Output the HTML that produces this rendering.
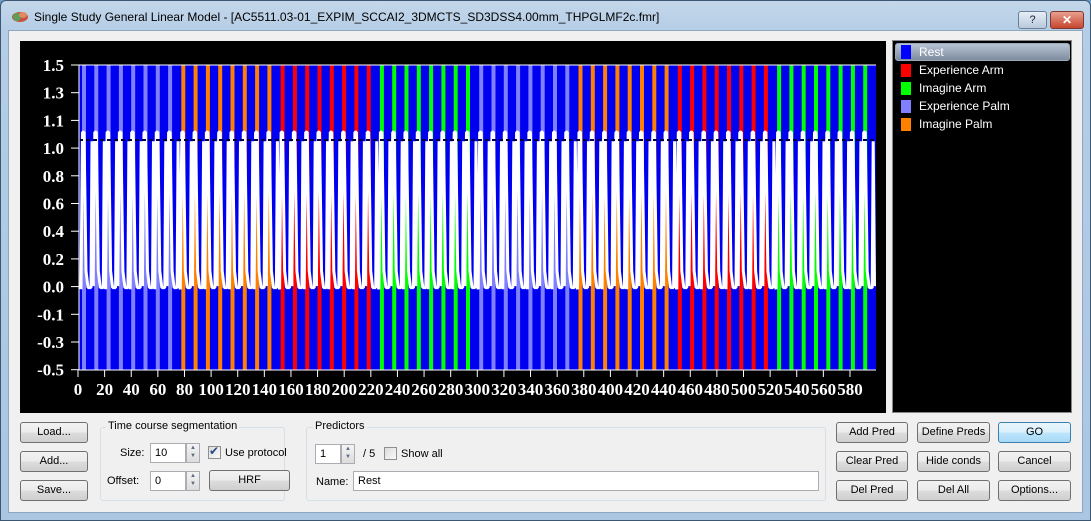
<!DOCTYPE html>
<html><head><meta charset="utf-8"><style>
*{margin:0;padding:0;box-sizing:border-box}
body{width:1091px;height:521px;overflow:hidden;font-family:"Liberation Sans",sans-serif;font-size:11px;color:#000;background:#6b9bc7}
.win{position:absolute;left:0;top:0;width:1091px;height:521px;border-radius:6px 6px 0 0;background:linear-gradient(#c4d7ea,#b5cde6 30px,#aac6e3);border:1px solid #3b5772}
.title{position:absolute;left:33px;top:9px;font-size:12px;color:#000;font-family:"Liberation Sans",sans-serif}
.client{position:absolute;left:8px;top:30px;width:1075px;height:483px;background:#f0f0f0;border:1px solid #8ea6bf}
.btn{position:absolute;height:21px;border:1px solid #707070;border-radius:3px;background:linear-gradient(#f2f2f2,#ebebeb 50%,#dddddd 51%,#cfcfcf);text-align:center;line-height:19px;font-size:11px}
.grp{position:absolute;border:1px solid #d5dfe5;border-radius:3px}
.gl{position:absolute;background:#f0f0f0;padding:0 2px;font-size:11px}
.edit{position:absolute;background:#fff;border:1px solid #abadb3;height:20px;line-height:18px;padding-left:4px}
.spin{position:absolute;width:14px;height:20px;border:1px solid #abadb3;background:linear-gradient(#f4f4f4,#dcdcdc);font-size:6px;line-height:8px;text-align:center;color:#5a6a80}
.lbl{position:absolute}
.cb{position:absolute;width:13px;height:13px;border:1px solid #8f8f8f;background:linear-gradient(135deg,#dcdcdc,#fafafa)}
</style></head><body>
<div class="win">
<svg style="position:absolute;left:10px;top:8px" width="18" height="14"><ellipse cx="9" cy="8" rx="8" ry="5" fill="#c8503c"/><ellipse cx="6" cy="8" rx="4" ry="4" fill="#5aa05a"/><ellipse cx="12" cy="6" rx="4" ry="3" fill="#e08a60"/></svg>
<div class="title">Single Study General Linear Model - [AC5511.03-01_EXPIM_SCCAI2_3DMCTS_SD3DSS4.00mm_THPGLMF2c.fmr]</div>
<div style="position:absolute;left:1017px;top:10px;width:29px;height:18px;border:1px solid #6d7f93;border-radius:3px;background:linear-gradient(#e6eef7,#b8c9dc);text-align:center;font-size:11px;line-height:16px;color:#223">?</div>
<div style="position:absolute;left:1049px;top:10px;width:34px;height:18px;border:1px solid #7a3a30;border-radius:3px;background:linear-gradient(#e8a090,#c7452f);text-align:center;color:#fff;font-weight:bold;font-size:12px;line-height:16px">✕</div>
</div>
<div class="client"></div>
<svg id="ch" style="position:absolute;left:0;top:0" width="1091" height="521"></svg>
<div style="position:absolute;left:892px;top:40px;width:180px;height:373px;background:#000;border:1px solid #888"></div>
<div style="position:absolute;left:895px;top:43px;width:175px;height:18px;border:1px solid #9ab;border-radius:3px;background:linear-gradient(#b8c4d4,#7e8ca0)"></div>
<div style="position:absolute;left:901px;top:45px;width:10px;height:14px;background:#0000ff"></div>
<div style="position:absolute;left:901px;top:64px;width:10px;height:13px;background:#ff0000"></div>
<div style="position:absolute;left:901px;top:82px;width:10px;height:13px;background:#00ff00"></div>
<div style="position:absolute;left:901px;top:100px;width:10px;height:13px;background:#8080ff"></div>
<div style="position:absolute;left:901px;top:118px;width:10px;height:13px;background:#ff8000"></div>
<div style="position:absolute;left:919px;top:45px;color:#fff;font-size:12px;line-height:15px">Rest</div>
<div style="position:absolute;left:919px;top:63px;color:#fff;font-size:12px;line-height:15px">Experience Arm</div>
<div style="position:absolute;left:919px;top:81px;color:#fff;font-size:12px;line-height:15px">Imagine Arm</div>
<div style="position:absolute;left:919px;top:99px;color:#fff;font-size:12px;line-height:15px">Experience Palm</div>
<div style="position:absolute;left:919px;top:117px;color:#fff;font-size:12px;line-height:15px">Imagine Palm</div>
<div class="btn" style="left:20px;top:422px;width:68px">Load...</div>
<div class="btn" style="left:20px;top:451px;width:68px">Add...</div>
<div class="btn" style="left:20px;top:480px;width:68px">Save...</div>
<div class="grp" style="left:100px;top:427px;width:185px;height:74px"></div>
<div class="gl" style="left:106px;top:420px">Time course segmentation</div>
<div class="lbl" style="left:120px;top:447px">Size:</div>
<div class="edit" style="left:150px;top:443px;width:36px">10</div>
<div class="spin" style="left:186px;top:443px">▲<br>▼</div>
<div class="cb" style="left:208px;top:446px"></div><div class="lbl" style="left:209px;top:444px;color:#2a4a8a;font-size:12px">✔</div>
<div class="lbl" style="left:225px;top:447px">Use protocol</div>
<div class="lbl" style="left:107px;top:475px">Offset:</div>
<div class="edit" style="left:150px;top:471px;width:36px">0</div>
<div class="spin" style="left:186px;top:471px">▲<br>▼</div>
<div class="btn" style="left:209px;top:470px;width:81px">HRF</div>
<div class="grp" style="left:306px;top:427px;width:520px;height:74px"></div>
<div class="gl" style="left:313px;top:420px">Predictors</div>
<div class="edit" style="left:315px;top:444px;width:26px">1</div>
<div class="spin" style="left:341px;top:444px">▲<br>▼</div>
<div class="lbl" style="left:363px;top:448px">/ 5</div>
<div class="cb" style="left:384px;top:447px"></div>
<div class="lbl" style="left:401px;top:448px">Show all</div>
<div class="lbl" style="left:316px;top:476px">Name:</div>
<div class="edit" style="left:353px;top:471px;width:466px">Rest</div>
<div class="btn" style="left:836px;top:422px;width:72px">Add Pred</div>
<div class="btn" style="left:917px;top:422px;width:73px">Define Preds</div>
<div class="btn" style="left:998px;top:422px;width:73px;border-color:#3c7fb1;background:linear-gradient(#eaf6fd,#d9f0fc 50%,#bee6fd 51%,#a7d9f5)">GO</div>
<div class="btn" style="left:836px;top:451px;width:72px">Clear Pred</div>
<div class="btn" style="left:917px;top:451px;width:73px">Hide conds</div>
<div class="btn" style="left:998px;top:451px;width:73px">Cancel</div>
<div class="btn" style="left:836px;top:480px;width:72px">Del Pred</div>
<div class="btn" style="left:917px;top:480px;width:73px">Del All</div>
<div class="btn" style="left:998px;top:480px;width:73px">Options...</div>
<script>
var s='<rect x="20" y="41" width="866" height="372" fill="#000"/>';
s+='<rect x="79" y="65" width="797" height="305" fill="#0000f0"/>';
var cols=['#8080ff','#ff8000','#ff0000','#00ff00'];
var Y=function(v){return 65+(1.5-v)*152.5};
var d='';
for(var b=0;b<8;b++){var bs=82+99.3*b;for(var i=0;i<8;i++){var x=bs+12.3*i;
s+='<rect x="'+x.toFixed(1)+'" y="65" width="4" height="305" fill="'+cols[b%4]+'"/>';
var lo=(i%2==0)?Y(0.03):Y(0.15);
d+=(d?'L':'M')+(x-1).toFixed(1)+' '+lo.toFixed(1)+'L'+(x+0.5).toFixed(1)+' '+Y(1.06).toFixed(1)+'L'+(x+2).toFixed(1)+' '+Y(1.06).toFixed(1)+'L'+(x+4).toFixed(1)+' '+Y(0.15).toFixed(1)+'L'+(x+6).toFixed(1)+' '+Y(0.04).toFixed(1)+'L'+(x+9).toFixed(1)+' '+Y(0.04).toFixed(1)+'L'+(x+10).toFixed(1)+' '+Y(1.0).toFixed(1)+'L'+(x+11.3).toFixed(1)+' '+Y(0.05).toFixed(1);
}}
s+='<path d="'+d+'" stroke="#fff" stroke-width="3" stroke-linejoin="bevel" fill="none"/>';
s+='<line x1="79" y1="140" x2="876" y2="140" stroke="#000040" stroke-width="2" stroke-dasharray="4 3"/>';
s+='<line x1="79" y1="65" x2="876" y2="65" stroke="#fff"/><line x1="79" y1="65" x2="79" y2="370" stroke="#fff"/><line x1="79" y1="370" x2="876" y2="370" stroke="#fff"/>';
var yl=['1.5','1.3','1.1','1.0','0.8','0.6','0.4','0.2','0.0','-0.1','-0.3','-0.5'];
for(var k=0;k<12;k++){var yy=65+k*27.7;s+='<text x="64" y="'+(yy+6)+'" fill="#fff" font-family="Liberation Serif" font-weight="bold" font-size="17" text-anchor="end">'+yl[k]+'</text><line x1="71" y1="'+yy+'" x2="79" y2="'+yy+'" stroke="#fff"/>';}
for(var v=0;v<=580;v+=20){var xx=78+v*1.331;s+='<line x1="'+xx+'" y1="370" x2="'+xx+'" y2="377" stroke="#fff"/><text x="'+xx+'" y="395" fill="#fff" font-family="Liberation Serif" font-weight="bold" font-size="17" text-anchor="middle">'+v+'</text>';}
document.getElementById('ch').innerHTML=s;
</script>
</body></html>
